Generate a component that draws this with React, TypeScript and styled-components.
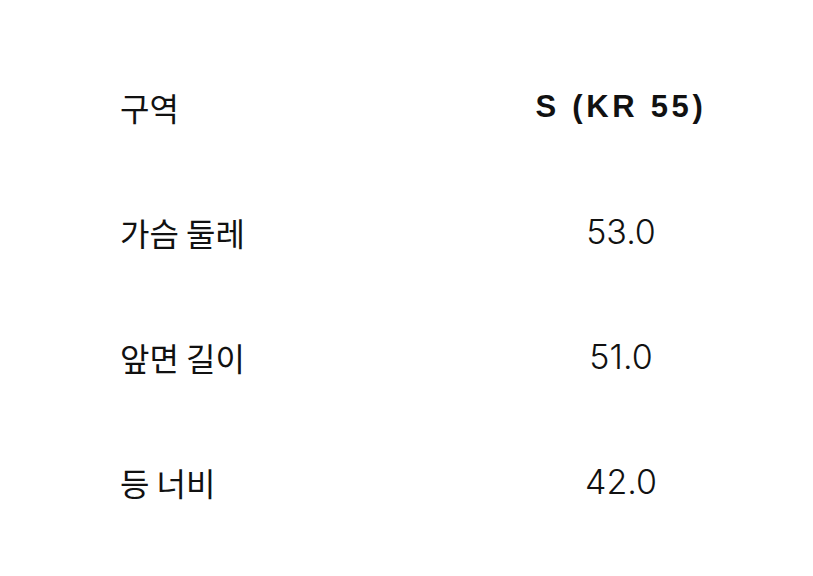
import React from "react";
import styled, { createGlobalStyle } from "styled-components";

const GlobalStyle = createGlobalStyle`
  html, body {
    margin: 0;
    padding: 0;
    background: #fff;
  }
  body {
    font-family: "Liberation Sans", "Noto Sans CJK KR", sans-serif;
    color: #111;
  }
`;

const Table = styled.div`
  display: grid;
  grid-template-columns: 1fr 300px;
  grid-auto-rows: 125px;
  padding: 44px 42px 0 120px;
  width: 813px;
  box-sizing: border-box;
`;

const Label = styled.div`
  display: flex;
  align-items: center;
  font-family: "Noto Sans CJK KR", sans-serif;
  font-size: 32px;
  font-weight: 400;
  color: #111;
`;

const Value = styled.div<{ $head?: boolean }>`
  display: flex;
  align-items: center;
  justify-content: center;
  font-family: ${(p) =>
    p.$head
      ? `"Liberation Sans", "Noto Sans CJK KR", sans-serif`
      : `Inter, "Liberation Sans", sans-serif`};
  font-size: ${(p) => (p.$head ? "31px" : "34px")};
  font-weight: ${(p) => (p.$head ? 700 : 300)};
  letter-spacing: ${(p) => (p.$head ? "3.7px" : "0")};
  color: #111;
`;

const rows = [
  { label: "가슴 둘레", value: "53.0" },
  { label: "앞면 길이", value: "51.0" },
  { label: "등 너비", value: "42.0" },
];

export default function App() {
  return (
    <>
      <GlobalStyle />
      <Table>
        <Label>구역</Label>
        <Value $head>S (KR 55)</Value>
        {rows.map((r) => (
          <React.Fragment key={r.label}>
            <Label>{r.label}</Label>
            <Value>{r.value}</Value>
          </React.Fragment>
        ))}
      </Table>
    </>
  );
}
